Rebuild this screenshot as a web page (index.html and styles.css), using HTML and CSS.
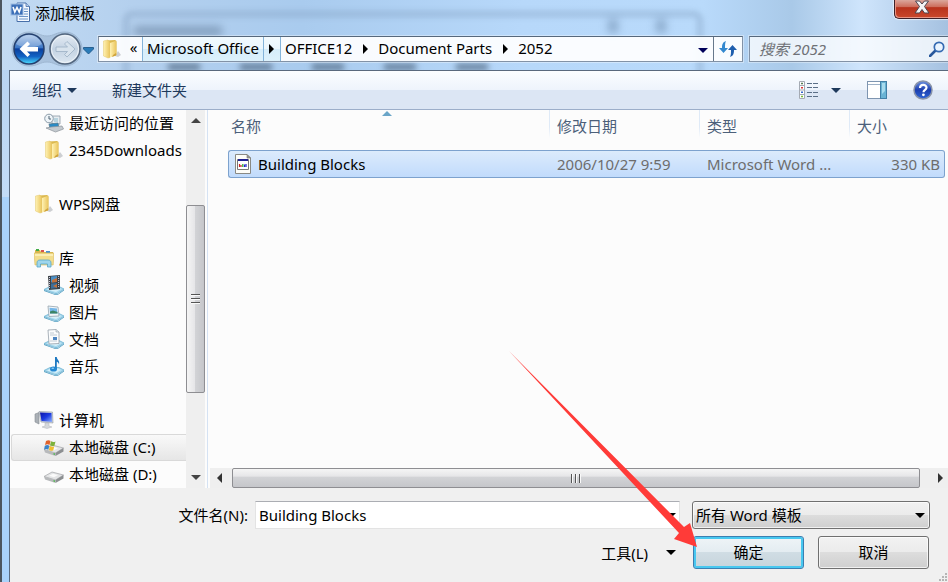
FILE: index.html
```html
<!DOCTYPE html>
<html lang="zh-CN">
<head>
    <meta charset="UTF-8">
    <meta name="viewport" content="width=device-width, initial-scale=1.0">
    <title>添加模板</title>
    <link rel="stylesheet" href="styles.css">
</head>
<body>
    <svg class="defs" width="0" height="0">
        <defs>
            <linearGradient id="gFolder" x1="0" y1="0" x2="1" y2="0">
                <stop offset="0" stop-color="#fff2b4"/>
                <stop offset="1" stop-color="#eac55c"/>
            </linearGradient>
            <linearGradient id="gBack" x1="0" y1="0" x2="0" y2="1">
                <stop offset="0" stop-color="#a9c6ea"/>
                <stop offset="0.45" stop-color="#3c77c6"/>
                <stop offset="0.5" stop-color="#0b3f9c"/>
                <stop offset="0.75" stop-color="#1263c4"/>
                <stop offset="1" stop-color="#4fe0ff"/>
            </linearGradient>
            <linearGradient id="gForward" x1="0" y1="0" x2="0" y2="1">
                <stop offset="0" stop-color="#e6edf5"/>
                <stop offset="0.5" stop-color="#c3d2e2"/>
                <stop offset="1" stop-color="#dde8f2"/>
            </linearGradient>
            <linearGradient id="gScreen" x1="0" y1="0" x2="1" y2="1">
                <stop offset="0" stop-color="#0a12a8"/>
                <stop offset="0.5" stop-color="#1c3be0"/>
                <stop offset="1" stop-color="#8fb2ff"/>
            </linearGradient>
            <linearGradient id="gHelp" x1="0" y1="0" x2="0" y2="1">
                <stop offset="0" stop-color="#6f93e0"/>
                <stop offset="0.5" stop-color="#1c3fae"/>
                <stop offset="1" stop-color="#2f66d6"/>
            </linearGradient>
            <symbol id="folder" viewBox="0 0 20 20">
                <path d="M13 17l3-5 3 4-3 2z" fill="#b9bcc0" opacity=".7"/>
                <path d="M5 1.500l8-.5 1.500 1v14L12 17H5z" fill="#dcb94f"/>
                <path d="M1.500 2L6 1l2 2.500V18.500L6 19 1.500 17z" fill="url(#gFolder)" stroke="#e3c76c" stroke-width=".5"/>
                <path d="M8 4l5.500-2 .8 1v13L8 18.500z" fill="url(#gFolder)"/>
                <path d="M11 16l3-2v2.500L10 18z" fill="#cfa43c"/>
            </symbol>
            <symbol id="base" viewBox="0 0 20 20">
                <path d="M0 14.500L6 11.500h9l5 2.500-6.500 4.500h-3z" fill="#a9d9ee" stroke="#6db3d2" stroke-width=".8"/>
                <path d="M3 14.500l4-2h7l3 1.500-5 3z" fill="#d8f1fa"/>
                <path d="M0 15l10 4 4 0 6-4.500v1L14 19.800h-3.500L0 16z" fill="#4f9cc0"/>
            </symbol>
            <symbol id="drive" viewBox="0 0 20 20">
                <path d="M0 12.500L8 8l11.500 3-8 5z" fill="#e4e5e6" stroke="#a2a4a6" stroke-width=".7"/>
                <path d="M0 12.500l11.500 3.500v3L1 15.500z" fill="#b7b9bb"/>
                <path d="M11.500 16l8-5v3.500l-8 4.500z" fill="#8c8f91"/>
                <path d="M5 11.800l4-2 5 1.200-4 2.200z" fill="#fbfbfb"/>
                <path d="M9.500 16.200l1.500.4v1.200l-1.500-.4z" fill="#38b838"/>
            </symbol>
        </defs>
    </svg>

    <div class="dialog">
        <header class="glass">
            <div class="behind" aria-hidden="true">
                <div class="ghost-window"></div>
                <div class="ghost-title"></div>
                <div class="ghost-help"></div>
                <div class="ghost-close"></div>
                <div class="ghost-tabs">
                    <span></span><span></span><span></span><span></span><span></span>
                </div>
            </div>

            <div class="titlebar">
                <svg class="icon" viewBox="0 0 20 20">
                    <path d="M7 1h9l3.500 3.500V19.500H7z" fill="#f5f9ff" stroke="#476fa9"/>
                    <path d="M16 1v3.500h3.500" fill="#b9d0ee" stroke="#476fa9" stroke-width=".8"/>
                    <path d="M14 7h4M14 9.500h4M14 12h4M9 14.500h9M9 17h9" stroke="#6b94c8"/>
                    <rect x="1" y="2" width="12" height="11" fill="#3d70b8" stroke="#9dbbe2"/>
                    <path d="M3 5l1.800 5L7 5.500 9.200 10 11 5" fill="none" stroke="#fff" stroke-width="1.600"/>
                </svg>
                <span class="title">添加模板</span>
                <button class="close" aria-label="关闭">
                    <svg viewBox="0 0 16 14" width="16" height="14">
                        <path d="M1.500 1h4L8 4l2.500-3h4L10.500 6.500 15 13h-4.500L8 9.500 5.500 13H1l4.500-6.500z" fill="#f4f4f4" stroke="#4c4650"/>
                    </svg>
                </button>
            </div>

            <div class="navbar">
                <div class="history">
                    <svg viewBox="0 0 84 38" width="84" height="38">
                        <path d="M19 2c9 0 11 4 18 4s9-4 18-4a17 17 0 0 1 0 34c-9 0-11-4-18-4s-9 4-18 4A17 17 0 0 1 19 2z" fill="#91aac6" opacity=".45" stroke="#7990ab"/>
                        <circle cx="19" cy="19" r="15" fill="url(#gBack)" stroke="#243f6d" stroke-width="1.500"/>
                        <path d="M6 14a14 14 0 0 1 26 0c-9 5-17 5-26 0z" fill="#fff" opacity=".28"/>
                        <path d="M9.500 19l8-7.500 2.500 2.500-3 3H28v4.500H17l3 3-2.500 2.500z" fill="#fff"/>
                        <circle cx="55" cy="19" r="15" fill="url(#gForward)" stroke="#52657d" stroke-width="1.500"/>
                        <circle cx="55" cy="19" r="13.500" fill="none" stroke="#edf3f8"/>
                        <path d="M65 19l-8-7.500-2.500 2.500 3 3H46v4.500h11.500l-3 3L57 27z" fill="#d8e3ed" stroke="#9cb0c4" stroke-width=".8"/>
                        <path d="M73.500 17.500h10v1.500l-5 5-5-5z" fill="#2a7bb8" stroke="#174f80" stroke-width=".8"/>
                    </svg>
                </div>
                <nav class="address">
                    <svg class="icon" viewBox="0 0 20 20"><use href="#folder"/></svg>
                    <button class="more" aria-label="上级">«</button>
                    <button class="crumb hot">Microsoft Office</button>
                    <button class="step hot" aria-label="展开"><i class="caret-right"></i></button>
                    <button class="crumb">OFFICE12</button>
                    <button class="step" aria-label="展开"><i class="caret-right"></i></button>
                    <button class="crumb">Document Parts</button>
                    <button class="step" aria-label="展开"><i class="caret-right"></i></button>
                    <button class="crumb">2052</button>
                    <button class="recent" aria-label="最近"><i class="caret-down"></i></button>
                    <button class="refresh" aria-label="刷新">
                        <svg viewBox="0 0 18 16" width="18" height="16">
                            <path d="M7 0C4 1 3 3 3 7H0l4.500 5L9 7H6c0-3 0-5 1-7z" fill="#3388cf"/>
                            <path d="M11 16c3-1 4-3 4-7h3l-4.500-5L9 9h3c0 3 0 5-1 7z" fill="#1f5fae"/>
                        </svg>
                    </button>
                </nav>
                <div class="search">
                    <input type="text" placeholder="搜索 2052" aria-label="搜索 2052">
                    <svg viewBox="0 0 16 16" width="16" height="16">
                        <path d="M1 15l5.500-5.500" stroke="#28579b" stroke-width="2.600" stroke-linecap="round"/>
                        <circle cx="10" cy="6" r="4.700" fill="#eaf4ff" stroke="#356ab2" stroke-width="1.700"/>
                    </svg>
                </div>
            </div>
        </header>

        <div class="panel">
            <div class="toolbar">
                <button class="tool">组织 <i class="caret-down"></i></button>
                <button class="tool">新建文件夹</button>
                <button class="tool views" aria-label="视图">
                    <svg viewBox="0 0 20 18" width="20" height="18">
                        <path d="M.5.500h5v17h-5zM.5 4.500h5M.5 9h5M.5 13.500h5" fill="#fff" stroke="#a4aab3"/>
                        <path d="M2 2.500h2" stroke="#5a7d57" stroke-width="1.500"/>
                        <path d="M2 6.800h2" stroke="#d33" stroke-width="1.500"/>
                        <path d="M2 11.200h2" stroke="#36c" stroke-width="1.500"/>
                        <path d="M2 15.500h2" stroke="#7b3" stroke-width="1.500"/>
                        <path d="M8 2.500h5M14 2.500h5M8 6.500h5M14 6.500h5M8 11.500h5M14 11.500h5M8 15.500h5M14 15.500h5" stroke="#5b6f87"/>
                    </svg>
                    <i class="caret-down"></i>
                </button>
                <button class="tool" aria-label="预览窗格">
                    <svg viewBox="0 0 20 18" width="20" height="18">
                        <rect x=".5" y=".5" width="19" height="17" fill="#fff" stroke="#7e95b0"/>
                        <path d="M1 3.500h12" stroke="#9fb2c8"/>
                        <rect x="13.500" y=".5" width="6" height="17" fill="#69b3d4" stroke="#417fa6"/>
                        <path d="M15 2h3v8l-3 3z" fill="#a6dbee"/>
                    </svg>
                </button>
                <button class="tool" aria-label="帮助">
                    <svg viewBox="0 0 20 20" width="20" height="20">
                        <circle cx="10" cy="10" r="9" fill="url(#gHelp)" stroke="#8993a8" stroke-width="1.500"/>
                        <path d="M7 8c0-4 6.500-4 6.500-.5 0 2.300-3 2.300-3 4.700" fill="none" stroke="#fff" stroke-width="2.200"/>
                        <circle cx="10.400" cy="14.800" r="1.400" fill="#fff"/>
                    </svg>
                </button>
            </div>

            <div class="main">
                <aside class="sidebar">
                    <ul class="tree">
                        <li class="child">
                            <svg class="icon" viewBox="0 0 20 20">
                                <path d="M8 3h8v8H8z" fill="#e7edf1" stroke="#8d9ba6" stroke-width=".8"/>
                                <path d="M10 5h4v4h-4z" fill="#b8d3de"/>
                                <circle cx="5" cy="5.500" r="4.300" fill="#eef4f8" stroke="#8b9ba8"/>
                                <path d="M5 3v3h2" fill="none" stroke="#4f6373"/>
                                <path d="M5 11l9-1 1 5-9 1z" fill="#2a8bc5" stroke="#597787" stroke-width=".7"/>
                                <path d="M2 15l5-1 11-1 1.500 3-8 3z" fill="#c4cacf" stroke="#8b9299" stroke-width=".7"/>
                            </svg>
                            最近访问的位置
                        </li>
                        <li class="child"><svg class="icon"><use href="#folder"/></svg>2345Downloads</li>
                        <li class="blank"></li>
                        <li><svg class="icon"><use href="#folder"/></svg>WPS网盘</li>
                        <li class="blank"></li>
                        <li>
                            <svg class="icon" viewBox="0 0 20 20">
                                <path d="M1 2h5l1 2h12v3H1z" fill="#d9b64d"/>
                                <path d="M2 1h3v2H2z" fill="#43ad48"/>
                                <path d="M7 2h3v2H7z" fill="#d9534f"/>
                                <path d="M12 3h4v2h-4z" fill="#4a90d0"/>
                                <path d="M0 5h20l-.8 12H1z" fill="#f3dd8c" stroke="#d8b85b" stroke-width=".6"/>
                                <path d="M1 6h18v2H1z" fill="#fbeeb5"/>
                                <path d="M3 19v-4c0-2 1-3 3-3h8c2 0 3 1 3 3v4h-3.500v-3h-7v3z" fill="#9fd6ec" stroke="#59a7c9" stroke-width=".8"/>
                            </svg>
                            库
                        </li>
                        <li class="child">
                            <svg class="icon" viewBox="0 0 20 20">
                                <use href="#base"/>
                                <path d="M4 1l12-1v14L5 15z" fill="#3c4146"/>
                                <path d="M7 1.500l6-.5v6L7 7.500z" fill="#4a8fc6"/>
                                <path d="M7 8.500L13 8v5l-6 .7z" fill="#3c6f9b"/>
                                <path d="M8 5l5-2v4l-5 .5zM9 11l4-2v4z" fill="#c2703a"/>
                                <path d="M5.500 2v12M14.600 1v12" stroke="#ccd" stroke-dasharray="1 1"/>
                            </svg>
                            视频
                        </li>
                        <li class="child">
                            <svg class="icon" viewBox="0 0 20 20">
                                <use href="#base"/>
                                <path d="M4 4l10 1 1 9-10 .5z" fill="#f3f6f8" stroke="#93a3af" stroke-width=".8"/>
                                <path d="M5.500 5.700l7.500.7.500 5-7.500.1z" fill="#74b6e8"/>
                                <path d="M6 9.500l3-1 4.500 1.500v1.500H6z" fill="#3c8466"/>
                            </svg>
                            图片
                        </li>
                        <li class="child">
                            <svg class="icon" viewBox="0 0 20 20">
                                <use href="#base"/>
                                <path d="M4 1l8-.5L15 3v11.500L5 15z" fill="#fbfcfd" stroke="#96a0aa" stroke-width=".8"/>
                                <path d="M12 .5V3h3" fill="#dde4ea" stroke="#96a0aa" stroke-width=".6"/>
                                <path d="M6 4h4M6 6h7M6 12h7" stroke="#b3bec8" stroke-width=".8"/>
                                <path d="M9 8h4v3H9z" fill="#4e86c2"/>
                            </svg>
                            文档
                        </li>
                        <li class="child">
                            <svg class="icon" viewBox="0 0 20 20">
                                <use href="#base"/>
                                <path d="M11 1h1.800c0 3 3.200 3 2.200 7.500-.5-2-1.400-2.500-2.200-2.700V13h-1.800z" fill="#1e78c0"/>
                                <ellipse cx="9.500" cy="13" rx="3.500" ry="2.600" fill="#2387d2"/>
                                <ellipse cx="8.800" cy="12.300" rx="1.400" ry=".8" fill="#93d0f5"/>
                            </svg>
                            音乐
                        </li>
                        <li class="blank"></li>
                        <li>
                            <svg class="icon" viewBox="0 0 20 20">
                                <path d="M1 4l4-1.500V14l-4-2z" fill="#aab0b6" stroke="#878d93" stroke-width=".6"/>
                                <path d="M5 1.500L18.500 2l.5 11-12-1z" fill="#cfd4da" stroke="#9199a2" stroke-width=".6"/>
                                <path d="M6 2.500l11.500.5.500 9-10.500-1z" fill="url(#gScreen)"/>
                                <path d="M11 13h4v3l3 1-5 1.500L8 17l3-1z" fill="#d5d8dc" stroke="#b0b5bb" stroke-width=".5"/>
                            </svg>
                            计算机
                        </li>
                        <li class="child selected">
                            <svg class="icon" viewBox="0 0 20 20">
                                <use href="#drive"/>
                                <path d="M2 4c2-1 3-1 4.500 0L5.500 8C4 7 3 7 1 8z" fill="#e0622b"/>
                                <path d="M7 4.300c2 1 3 1 4.500.2l-1 4c-1.500.8-3 .8-4.500-.2z" fill="#7db23a"/>
                                <path d="M.8 8.800c2-1 3-1 4.500 0l-1 4c-1.500-1-3-1-4.300 0z" fill="#3b83c9"/>
                                <path d="M5.800 9c2 1 3 1 4.500.2l-1 4c-1.500.8-3 .8-4.500-.2z" fill="#f0bf30"/>
                            </svg>
                            本地磁盘 (C:)
                        </li>
                        <li class="child"><svg class="icon"><use href="#drive"/></svg>本地磁盘 (D:)</li>
                    </ul>
                    <div class="vscroll">
                        <i class="arrow-up"></i>
                        <div class="vthumb"><i class="grip"></i></div>
                        <i class="arrow-down"></i>
                    </div>
                </aside>

                <section class="files">
                    <div class="list">
                        <table>
                            <thead>
                                <tr>
                                    <th class="col-name">名称<i class="sort"></i></th>
                                    <th class="col-date">修改日期</th>
                                    <th class="col-type">类型</th>
                                    <th class="col-size">大小</th>
                                </tr>
                            </thead>
                            <tbody>
                                <tr>
                                    <td>
                                        <div class="file">
                                            <svg viewBox="0 0 16 20" width="16" height="20">
                                                <path d="M.5.500H12L15.500 4v15.500H.5z" fill="#fdfdf8" stroke="#8a8a84"/>
                                                <path d="M12 .5V4h3.500z" fill="#9a9a94" stroke="#77776f" stroke-width=".6"/>
                                                <path d="M2.500 5.500h11v10h-11z" fill="#fff" stroke="#777"/>
                                                <path d="M3 6h10" stroke="#20208e" stroke-width="2"/>
                                                <path d="M4.500 10v3M6 11v2" stroke="#c22" stroke-width="1.200"/>
                                                <path d="M7.800 10v3" stroke="#2a2" stroke-width="1.200"/>
                                                <path d="M9.500 10.500v2.500M11 10v3" stroke="#22c" stroke-width="1.200"/>
                                            </svg>
                                            Building Blocks
                                        </div>
                                    </td>
                                    <td>2006/10/27 9:59</td>
                                    <td>Microsoft Word ...</td>
                                    <td class="size">330 KB</td>
                                </tr>
                            </tbody>
                        </table>
                    </div>
                    <div class="hscroll">
                        <i class="arrow-left"></i>
                        <div class="hthumb"><i class="grip"></i></div>
                        <i class="arrow-right"></i>
                    </div>
                </section>
            </div>

            <footer class="footer">
                <div class="row">
                    <label class="name-label" for="fileName">文件名(N):</label>
                    <div class="combo">
                        <input type="text" id="fileName" value="Building Blocks">
                        <i class="caret-down"></i>
                    </div>
                    <div class="filter">
                        <select aria-label="文件类型">
                            <option>所有 Word 模板</option>
                        </select>
                        <i class="caret-down"></i>
                    </div>
                </div>
                <div class="row actions">
                    <button class="tools">工具(L) <i class="caret-down"></i></button>
                    <div class="confirm">
                        <button class="btn btn-default">确定</button>
                        <svg class="pointer" viewBox="0 0 188 196" width="188" height="196">
                            <path d="M0 0L175 176 181 172 188 196 165 188 170 182z" fill="#ff3b38"/>
                        </svg>
                    </div>
                    <button class="btn">取消</button>
                </div>
                <svg class="resize" viewBox="0 0 9 9" width="9" height="9">
                    <path d="M6 0h2v2H6zM3 3h2v2H3zM6 3h2v2H6zM0 6h2v2H0zM3 6h2v2H3zM6 6h2v2H6z" fill="#b5b5b5"/>
                </svg>
            </footer>
        </div>
    </div>
</body>
</html>
```
FILE: styles.css
```css
* {
    box-sizing: border-box;
}

body {
    margin: 0;
    font-family: "Noto Sans", "Noto Sans CJK SC", sans-serif;
    font-size: 15px;
    line-height: 20px;
    color: #000;
    overflow: hidden;
}

button,
input,
select {
    font: inherit;
    color: inherit;
    margin: 0;
    padding: 0;
    border: none;
    background: none;
    border-radius: 0;
}

svg {
    display: block;
    flex: none;
}

.defs {
    position: absolute;
}

.icon {
    width: 20px;
    height: 20px;
}

.dialog {
    display: flex;
    flex-direction: column;
    min-height: 100vh;
    padding-left: 9px;
    background: linear-gradient(to right, #4c5660 0, #4c5660 2px, transparent 2px),
        linear-gradient(to bottom, #b2cfee 0, #c3dcf7 197px, #a9d2fb 197px, #a9d2fb 100%);
}

/* glass frame */
.glass {
    position: relative;
    height: 70px;
    margin-left: -7px;
    padding-left: 7px;
    background: linear-gradient(to right, #c3dbf3 0, #b4d0ee 130px, #a9cbee 300px, #b7d8fa 520px, #b9dafb 700px, #a9c9e8 790px, #cfe5fc 860px, #a5c1e0 100%);
}

.behind {
    position: absolute;
    inset: 0;
    overflow: hidden;
}

.behind div {
    position: absolute;
}

.ghost-window {
    top: 12px;
    left: 122px;
    right: 246px;
    height: 100px;
    border: 4px solid #7b98b9;
    border-radius: 8px;
    filter: blur(3px);
    opacity: 0.6;
}

.ghost-title {
    top: 26px;
    left: 132px;
    width: 88px;
    height: 10px;
    background: #67819f;
    filter: blur(4px);
    opacity: 0.6;
}

.ghost-help,
.ghost-close {
    top: 19px;
    width: 10px;
    height: 14px;
    background: #5f7d9e;
    filter: blur(4px);
    opacity: 0.5;
}

.ghost-help {
    right: 330px;
}

.ghost-close {
    right: 282px;
}

.ghost-tabs {
    top: 64px;
    left: 166px;
    display: flex;
    gap: 40px;
    filter: blur(3px);
}

.ghost-tabs span {
    width: 32px;
    height: 6px;
    background: #486079;
    opacity: 0.8;
}

.titlebar {
    position: relative;
    display: flex;
    align-items: flex-start;
    height: 28px;
    padding-left: 1px;
}

.titlebar .icon {
    margin-top: 2px;
}

.title {
    margin: 3px auto 0 5px;
}

.close {
    display: flex;
    justify-content: center;
    width: 54px;
    height: 19px;
    border: 1px solid #3d2029;
    border-top: none;
    border-right: none;
    border-bottom-left-radius: 5px;
    background: linear-gradient(#dba79c, #cc6a58 40%, #b8321c 42%, #c9482c);
    box-shadow: 0 0 1px 1px rgba(255, 255, 255, 0.6), inset 1px -1px 0 #e79585;
}

.navbar {
    position: relative;
    display: flex;
    align-items: center;
    height: 42px;
}

.history {
    width: 89px;
    padding-left: 1px;
}

.address {
    display: flex;
    align-items: stretch;
    flex: 1;
    height: 26px;
    border: 1px solid #8292a6;
    border-top-color: #56687c;
    background: rgba(255, 255, 255, 0.92);
    box-shadow: 0 0 0 1px rgba(255, 255, 255, 0.35);
}

.address .icon {
    margin: 2px 3px;
}

.more {
    width: 17px;
    padding-bottom: 4px;
}

.crumb {
    padding: 0 4px 2px;
    white-space: nowrap;
}

.crumb.hot,
.step.hot {
    border-left: 1px solid #84b4da;
    background: linear-gradient(#f2fafe, #eaf6fd 50%, #d5edfa 50%, #dcf1fc);
}

.step {
    display: flex;
    align-items: center;
    justify-content: center;
    width: 18px;
}

.step.hot {
    border-right: 1px solid #84b4da;
}

.caret-right {
    border: 5px solid transparent;
    border-left-color: #000;
    border-right: none;
}

.caret-down {
    display: inline-block;
    border: 5px solid transparent;
    border-top-color: currentColor;
    border-bottom: none;
}

.recent {
    display: flex;
    align-items: center;
    margin-left: auto;
    padding: 2px 5px 0;
    color: #00005a;
}

.refresh {
    width: 29px;
    padding-left: 5px;
    border-left: 1px solid #66788c;
}

.search {
    display: flex;
    align-items: center;
    width: 199px;
    height: 26px;
    margin-left: 6px;
    padding: 0 3px 0 9px;
    border: 1px solid #8292a6;
    border-top-color: #56687c;
    border-right: none;
    background: rgba(255, 255, 255, 0.75);
    box-shadow: 0 0 0 1px rgba(255, 255, 255, 0.35);
}

.search input {
    flex: 1;
    min-width: 0;
    outline: none;
}

.search input::placeholder {
    color: #6e7176;
    font-style: italic;
    opacity: 1;
}

/* content */
.panel {
    display: flex;
    flex-direction: column;
    flex: 1;
    border-left: 1px solid #596a80;
    background: #fcfcfc;
}

.toolbar {
    display: flex;
    align-items: center;
    height: 40px;
    padding: 0 15px 0 22px;
    border-top: 1px solid #59697d;
    border-bottom: 1px solid #9caec9;
    background: linear-gradient(#fbfdff, #eef4fc 50%, #dce6f4 50%, #dce6f4);
    color: #1e395b;
}

.tool {
    display: flex;
    align-items: center;
    gap: 5px;
    margin-right: 26px;
}

.tool:first-child {
    margin-right: 35px;
}

.tool:last-child {
    margin-right: 0;
}

.tool.views {
    gap: 12px;
    margin-left: auto;
}

.main {
    display: flex;
    flex: 1;
}

.sidebar {
    display: flex;
    width: 198px;
    border-right: 1px solid #d5e2f3;
}

.tree {
    flex: 1;
    min-width: 0;
    margin: 0;
    padding: 0 0 0 1px;
    list-style: none;
}

.tree li {
    display: flex;
    align-items: center;
    gap: 5px;
    height: 27px;
    padding: 0 0 2px 23px;
    white-space: nowrap;
    overflow: hidden;
}

.tree .child {
    padding-left: 33px;
}

.tree .selected {
    padding-left: 32px;
    border: 1px solid #d9d9d9;
    border-right: none;
    border-radius: 3px 0 0 3px;
    background: linear-gradient(#f9f9f9, #e6e6e6);
}

.vscroll {
    display: flex;
    flex-direction: column;
    align-items: center;
    width: 19px;
    margin-right: 2px;
    padding: 8px 0;
    background: #efefef;
}

.arrow-up,
.arrow-down {
    border: 5px solid transparent;
}

.arrow-up {
    border-top: none;
    border-bottom-color: #444;
}

.arrow-down {
    margin-top: auto;
    border-bottom: none;
    border-top-color: #444;
}

.vthumb,
.hthumb {
    display: flex;
    align-items: center;
    justify-content: center;
    border: 1px solid #8e8e92;
    border-radius: 2px;
}

.vthumb {
    width: 19px;
    height: 52%;
    margin-top: 82px;
    background: linear-gradient(to right, #f5f5f5, #e6e6e8 45%, #d2d3d6 50%, #c5c6ca);
}

.vthumb .grip {
    width: 9px;
    height: 10px;
    background: repeating-linear-gradient(#555 0, #555 1px, #fafafa 1px, #fafafa 2px, transparent 2px, transparent 4px);
}

.files {
    display: flex;
    flex-direction: column;
    flex: 1;
    min-width: 0;
    padding-left: 2px;
}

.list {
    flex: 1;
    padding: 0 3px 0 18px;
}

table {
    width: 100%;
    table-layout: fixed;
    border-collapse: separate;
    border-spacing: 0;
}

th {
    position: relative;
    height: 40px;
    padding: 0 0 8px 7px;
    font-weight: normal;
    text-align: left;
    color: #4c607a;
    background: linear-gradient(#dfeaf7, #dfeaf7 60%, transparent) right top / 1px 28px no-repeat;
}

.col-name {
    padding-left: 3px;
}

.col-date,
.col-type {
    width: 150px;
}

.col-size {
    width: 95px;
    background: none;
}

.sort {
    position: absolute;
    top: 1px;
    left: 50%;
    margin-left: -7px;
    border: 5px solid transparent;
    border-top: none;
    border-bottom-color: #6aa5c8;
}

td {
    height: 28px;
    padding: 0 0 0 7px;
    border-top: 1px solid #7da2ce;
    border-bottom: 1px solid #7da2ce;
    background: linear-gradient(#dcebfc, #c1dbfc);
    color: #6d6d6d;
    white-space: nowrap;
}

td:first-child {
    padding-left: 6px;
    border-left: 1px solid #7da2ce;
    border-radius: 3px 0 0 3px;
}

td:last-child {
    border-right: 1px solid #7da2ce;
    border-radius: 0 3px 3px 0;
}

.size {
    padding-right: 4px;
    text-align: right;
}

.file {
    display: flex;
    align-items: center;
    gap: 7px;
    color: #000;
}

.hscroll {
    display: flex;
    align-items: center;
    height: 20px;
    padding: 0 5px 0 7px;
    background: #efefef;
}

.arrow-left,
.arrow-right {
    border: 5px solid transparent;
}

.arrow-left {
    border-left: none;
    border-right-color: #333;
}

.arrow-right {
    border-right: none;
    border-left-color: #333;
}

.hthumb {
    flex: 1;
    height: 20px;
    margin: 0 18px 0 10px;
    background: linear-gradient(#f5f5f5, #e6e6e8 40%, #d2d3d6 45%, #c5c6ca);
}

.hthumb .grip {
    width: 10px;
    height: 9px;
    background: repeating-linear-gradient(to right, #555 0, #555 1px, #fafafa 1px, #fafafa 2px, transparent 2px, transparent 4px);
}

/* file name, type and buttons */
.footer {
    position: relative;
    display: flex;
    flex-direction: column;
    gap: 7px;
    padding: 13px 18px 13px 0;
    background: #f0f0f0;
}

.row {
    display: flex;
    align-items: center;
}

.name-label {
    width: 238px;
    margin-right: 7px;
    text-align: right;
}

.combo {
    display: flex;
    align-items: center;
    flex: 1;
    height: 28px;
    margin-right: 12px;
    padding: 0 3px;
    border: 1px solid #e3e3e3;
    border-top-color: #abadb3;
    background: #fff;
}

.combo input {
    flex: 1;
    min-width: 0;
    outline: none;
}

.filter {
    position: relative;
    width: 238px;
}

.filter select {
    display: block;
    width: 100%;
    height: 28px;
    padding: 0 3px;
    border: 1px solid #707070;
    border-radius: 3px;
    appearance: none;
    background: linear-gradient(#f2f2f2, #ebebeb 50%, #dddddd 50%, #cfcfcf);
    box-shadow: inset 0 0 0 1px rgba(255, 255, 255, 0.7);
}

.filter .caret-down {
    position: absolute;
    top: 12px;
    right: 5px;
    pointer-events: none;
}

.actions {
    justify-content: flex-end;
    gap: 14px;
    padding-right: 1px;
}

.tools {
    display: flex;
    align-items: center;
    gap: 18px;
    margin-right: 3px;
}

.btn {
    display: block;
    width: 111px;
    height: 33px;
    padding-bottom: 1px;
    border: 1px solid #707070;
    border-radius: 3px;
    background: linear-gradient(#f2f2f2, #ebebeb 50%, #dddddd 50%, #cfcfcf);
    box-shadow: inset 0 0 0 1px rgba(255, 255, 255, 0.7);
}

.btn-default {
    border-color: #3c7fb1;
    background: linear-gradient(#eff4f7, #e3ecf1 50%, #d0dde4 50%, #c6d4dc);
    box-shadow: inset 0 0 0 2px #48c8f0;
}

.confirm {
    position: relative;
}

.pointer {
    position: absolute;
    right: 107px;
    bottom: 22px;
    pointer-events: none;
}

.resize {
    position: absolute;
    right: 0;
    bottom: 0;
}
```
